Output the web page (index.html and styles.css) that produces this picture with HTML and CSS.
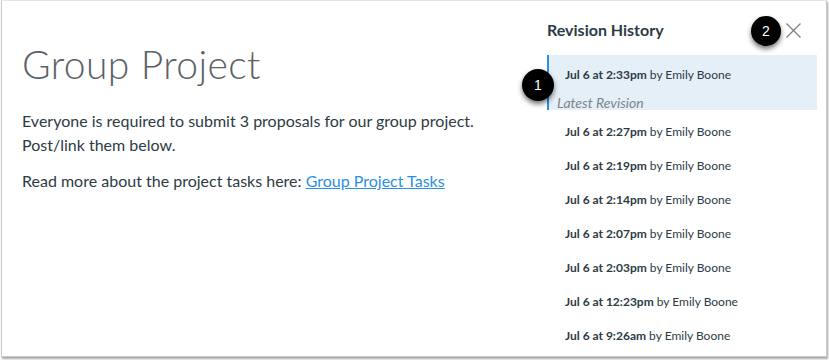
FILE: index.html
```html
<!DOCTYPE html>
<html lang="en">
<head>
<meta charset="utf-8">
<title>Group Project</title>
<link rel="stylesheet" href="styles.css">
</head>
<body>
<div class="frame">
  <main class="content">
    <h1 class="title">Group Project</h1>
    <p class="para">Everyone is required to submit 3 proposals for our group project. Post/link them below.</p>
    <p class="para para-second">Read more about the project tasks here: <a class="link" href="#">Group Project Tasks</a></p>
  </main>
  <aside class="panel">
    <div class="panel-head">
      <h2 class="panel-title">Revision History</h2>
      <button class="close" aria-label="Close">
        <svg width="15" height="15" viewBox="0 0 15 15"><path d="M0.5 0.5 L14.5 14.5 M14.5 0.5 L0.5 14.5" stroke="#7a8288" stroke-width="1.3" fill="none"/></svg>
      </button>
      <span class="badge badge-2">2</span>
    </div>
    <ul class="revisions">
      <li class="rev rev-current">
        <span class="rev-line"><b>Jul 6 at 2:33pm</b> by Emily Boone</span>
        <span class="rev-latest">Latest Revision</span>
        <span class="badge badge-1">1</span>
      </li>
      <li class="rev"><span class="rev-line"><b>Jul 6 at 2:27pm</b> by Emily Boone</span></li>
      <li class="rev"><span class="rev-line"><b>Jul 6 at 2:19pm</b> by Emily Boone</span></li>
      <li class="rev"><span class="rev-line"><b>Jul 6 at 2:14pm</b> by Emily Boone</span></li>
      <li class="rev"><span class="rev-line"><b>Jul 6 at 2:07pm</b> by Emily Boone</span></li>
      <li class="rev"><span class="rev-line"><b>Jul 6 at 2:03pm</b> by Emily Boone</span></li>
      <li class="rev"><span class="rev-line"><b>Jul 6 at 12:23pm</b> by Emily Boone</span></li>
      <li class="rev"><span class="rev-line"><b>Jul 6 at 9:26am</b> by Emily Boone</span></li>
    </ul>
  </aside>
</div>
</body>
</html>
```

FILE: styles.css
```css
html, body {
  margin: 0;
  padding: 0;
  background: #ffffff;
}
body {
  font-family: Lato, "Open Sans", "Liberation Sans", sans-serif;
  color: #2d3b45;
  width: 829px;
  height: 360px;
  overflow: hidden;
}
.frame {
  box-sizing: border-box;
  margin-left: 1px;
  width: 826px;
  height: 357px;
  border: 1px solid #c9c9c9;
  border-top-color: #e6e6e6;
  box-shadow: 1px 2px 2px rgba(0, 0, 0, 0.35);
  background: #fff;
  display: flex;
  overflow: hidden;
}
.content {
  width: 460px;
  padding: 40px 0 0 20px;
  flex: none;
}
.title {
  margin: 0;
  font-size: 39px;
  line-height: 46px;
  font-weight: 300;
  color: #5b6166;
  letter-spacing: 0.4px;
}
.para {
  margin: 22px 0 0;
  font-size: 16px;
  line-height: 24px;
}
.para-second {
  margin-top: 12px;
}
.link {
  color: #2b8fe3;
  text-decoration: underline;
}
.panel {
  margin-left: 65px;
  width: 270px;
  padding-top: 19px;
  flex: none;
}
.panel-head {
  position: relative;
  display: flex;
  align-items: center;
  justify-content: space-between;
  height: 20px;
}
.panel-title {
  margin: 0;
  font-size: 16px;
  line-height: 20px;
  font-weight: 700;
  color: #2d3b45;
}
.close {
  border: 0;
  background: none;
  padding: 0;
  margin-right: 16px;
  width: 15px;
  height: 15px;
  display: block;
}
.close svg {
  display: block;
}
.revisions {
  list-style: none;
  margin: 15px 0 0;
  padding: 0;
}
.rev {
  height: 34px;
  display: flex;
  align-items: center;
  padding-left: 18px;
  font-size: 12px;
  color: #2d3b45;
}
.rev b {
  font-weight: 700;
}
.rev-current {
  position: relative;
  height: 55px;
  box-sizing: border-box;
  margin-bottom: 4px;
  background: #e4eff7;
  border-left: 2px solid #2b8fe3;
  padding: 12px 0 0 8px;
  flex-direction: column;
  align-items: flex-start;
}
.rev-current .rev-line {
  padding-left: 8px;
  line-height: 16px;
}
.rev-latest {
  margin-top: 12px;
  font-size: 14px;
  line-height: 15px;
  font-style: italic;
  color: #7b868e;
}
.badge {
  position: absolute;
  width: 30px;
  height: 30px;
  border-radius: 50%;
  background: #000;
  color: #fff;
  font-family: "Liberation Sans", Arial, sans-serif;
  font-size: 14px;
  line-height: 30px;
  text-align: center;
  box-shadow: 0 3px 5px rgba(0, 0, 0, 0.55);
}
.badge-1 {
  left: -27px;
  top: 14px;
  width: 32px;
  height: 32px;
  line-height: 32px;
}
.badge-2 {
  left: 204px;
  top: -4px;
}
```
